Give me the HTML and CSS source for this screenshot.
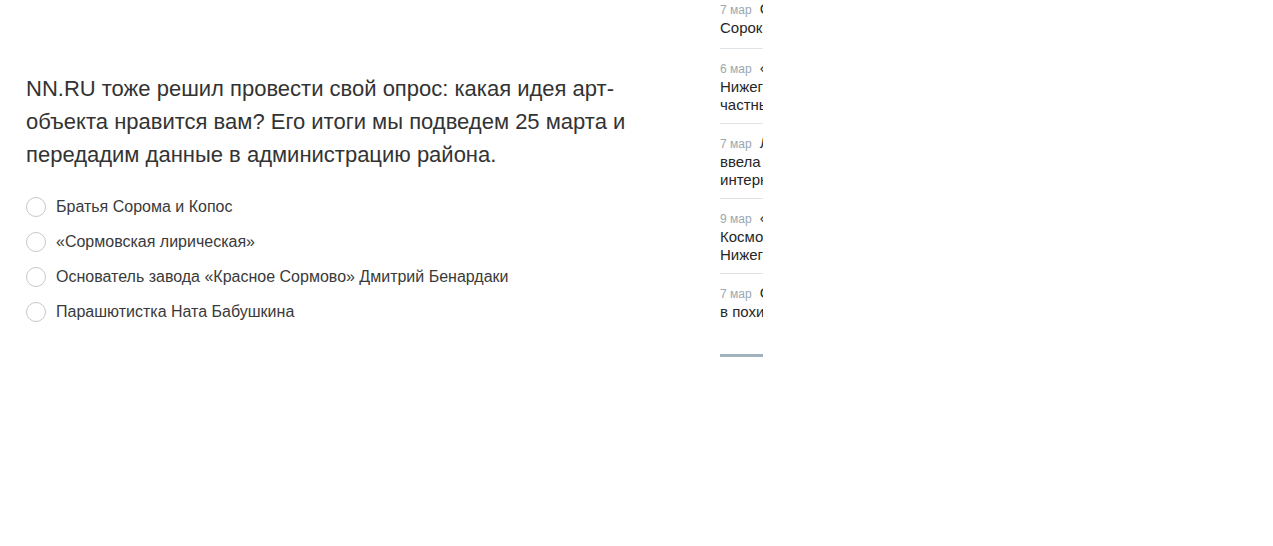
FILE: index.html
```html
<!DOCTYPE html>
<html lang="ru">
<head>
<meta charset="utf-8">
<title>Опрос</title>
<link rel="stylesheet" href="styles.css">
</head>
<body>
<div class="page">
  <main class="main">
    <p class="lead">NN.RU тоже решил провести свой опрос: какая идея арт-объекта нравится вам? Его итоги мы подведем 25 марта и передадим данные в администрацию района.</p>
    <ul class="poll">
      <li class="option"><span class="radio"></span><span class="label">Братья Сорома и Копос</span></li>
      <li class="option"><span class="radio"></span><span class="label">«Сормовская лирическая»</span></li>
      <li class="option"><span class="radio"></span><span class="label">Основатель завода «Красное Сормово» Дмитрий Бенардаки</span></li>
      <li class="option"><span class="radio"></span><span class="label">Парашютистка Ната Бабушкина</span></li>
    </ul>
  </main>
  <aside class="side">
    <ul class="news">
      <li class="news-item first"><span class="line"><span class="date">7 мар</span> Сормовичи просят привести в порядок</span><span class="line">Сорокин сквер</span></li>
      <li class="news-item"><span class="line"><span class="date">6 мар</span> «Дом-муравейник»:</span><span class="line">Нижегородцы пожаловались на</span><span class="line">частный дом без разрешения</span></li>
      <li class="news-item"><span class="line"><span class="date">7 мар</span> Летом администрация</span><span class="line">ввела запрет на продажу через</span><span class="line">интернет</span></li>
      <li class="news-item"><span class="line"><span class="date">9 мар</span> «Звездный путь»:</span><span class="line">Космонавты посетили</span><span class="line">Нижегородский планетарий</span></li>
      <li class="news-item"><span class="line"><span class="date">7 мар</span> Сормовича обвиняют</span><span class="line">в похищении автомобиля</span></li>
    </ul>
    <div class="side-bar"></div>
  </aside>
</div>
</body>
</html>
```

FILE: styles.css
```css
html, body {
  margin: 0;
  padding: 0;
  background: #ffffff;
}

body {
  font-family: Arial, "Liberation Sans", sans-serif;
  color: #333333;
}

.page {
  display: flex;
  align-items: flex-start;
  padding-left: 26px;
}

.main {
  width: 620px;
  flex: none;
  padding-top: 72px;
}

.lead {
  margin: 0;
  font-size: 22px;
  line-height: 33px;
  color: #333333;
}

.poll {
  list-style: none;
  margin: 18px 0 0;
  padding: 0;
}

.option {
  display: flex;
  align-items: center;
  height: 35px;
  font-size: 16px;
  color: #3a3a3a;
}

.radio {
  box-sizing: border-box;
  width: 20px;
  height: 20px;
  border: 1px solid #c8c8c8;
  border-radius: 50%;
  margin-right: 10px;
  flex: none;
}

.side {
  margin-left: 74px;
  width: 43px;
  overflow: hidden;
  flex: none;
}

.news {
  list-style: none;
  margin: 0;
  padding: 0;
  width: 43px;
}

.news-item {
  width: 43px;
  font-size: 15px;
  color: #262626;
  padding: 10px 0 10px;
  border-bottom: 1px solid #dde3e6;
}

.line {
  display: block;
  height: 18px;
  line-height: 18px;
  white-space: nowrap;
  overflow: hidden;
}

.line + .line {
  line-height: 19px;
}

.news-item.first {
  padding-top: 0;
  padding-bottom: 12px;
}

.news-item:last-child {
  border-bottom: none;
}

.date {
  font-size: 12px;
  color: #9aa8b0;
  margin-right: 4px;
}

.side-bar {
  margin-top: 24px;
  height: 3px;
  width: 43px;
  background: #a3b3bd;
}
```
